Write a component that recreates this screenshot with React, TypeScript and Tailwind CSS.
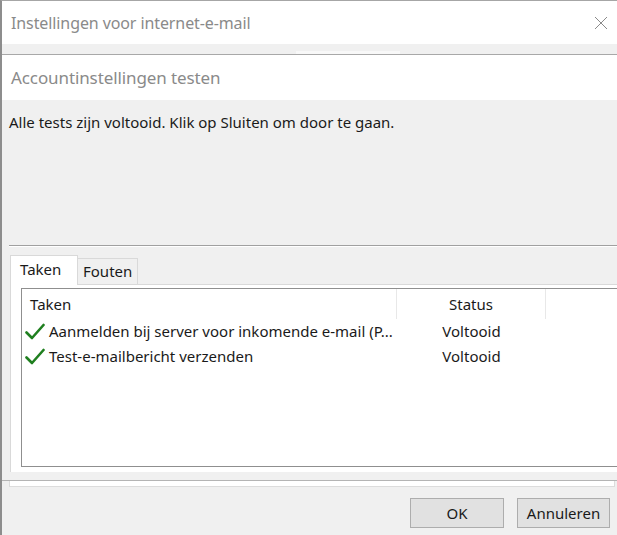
import React from "react";

const font = { fontFamily: '"Noto Sans", "Open Sans", sans-serif' };

function Check() {
  return (
    <svg width="20" height="18" viewBox="0 0 20 18" className="shrink-0">
      <path d="M1.5 9.5 L7 15 L18.5 2" fill="none" stroke="#1f7f1f" strokeWidth="2.6" strokeLinecap="round" strokeLinejoin="round" />
    </svg>
  );
}

export default function App() {
  return (
    <div className="w-[617px] h-[535px] overflow-hidden bg-[#f0f0f0] border-l-2 border-l-[#8d8d8d] border-t border-t-[#a6a6a6] text-[#1a1a1a]" style={font}>
      {/* title bar */}
      <div className="h-[43px] bg-white flex items-center justify-between pl-[9px] pr-[9px]">
        <span className="text-[16px] text-[#8a8a8a] tracking-[-0.1px]">Instellingen voor internet-e-mail</span>
        <svg width="14" height="14" viewBox="0 0 14 14">
          <path d="M1 1 L13 13 M13 1 L1 13" stroke="#8a8a8a" strokeWidth="1" />
        </svg>
      </div>
      <div className="h-[10px] bg-[#f0f0f0] flex items-end">
        <div className="ml-[294px] w-[104px] h-[3px] bg-[#f8f8f8]" />
      </div>
      <div className="h-px bg-[#a8a8a8]" />
      {/* header */}
      <div className="h-[45px] bg-white flex items-center pl-[9px]">
        <span className="text-[17px] text-[#8a8a8a] tracking-[-0.1px]">Accountinstellingen testen</span>
      </div>
      {/* body */}
      <div className="pl-[7px] pt-[10px] h-[145px]">
        <span className="text-[15px] text-[#1a1a1a]">Alle tests zijn voltooid. Klik op Sluiten om door te gaan.</span>
      </div>
      <div className="ml-[7px] h-px bg-[#a0a0a0]" />
      <div className="ml-[7px] h-px bg-white" />
      {/* tabs */}
      <div className="pl-[8px] pt-[7px] flex items-end h-[37px]">
        <div className="w-[68px] h-[30px] bg-white border border-[#d9d9d9] border-b-0 flex items-center pl-[9px] pb-[3px] text-[15px] relative z-10 -mb-px">Taken</div>
        <div className="w-[60px] h-[26px] bg-[#f0f0f0] border border-[#d9d9d9] border-l-0 border-b-0 flex items-center pl-[5px] text-[15px]">Fouten</div>
      </div>
      {/* tab panel */}
      <div className="ml-[8px] h-[188px] bg-white border-t border-l border-[#d9d9d9] pl-[10px] pt-[3px] pb-[5px]">
        <div className="h-full bg-white border-l border-t border-b border-[#8f8f8f]">
          <div className="flex h-[30px] text-[15px]">
            <div className="w-[375px] pl-[8px] flex items-center border-r border-[#e8e8e8]">Taken</div>
            <div className="w-[149px] flex items-center justify-center border-r border-[#e8e8e8]">Status</div>
          </div>
          <div className="flex h-[25px] items-center text-[15px]">
            <div className="w-[375px] pl-[3px] flex items-center gap-[4px] whitespace-nowrap overflow-hidden">
              <Check />
              <span>Aanmelden bij server voor inkomende e-mail (P...</span>
            </div>
            <div className="w-[149px] text-center">Voltooid</div>
          </div>
          <div className="flex h-[25px] items-center text-[15px]">
            <div className="w-[375px] pl-[3px] flex items-center gap-[4px] whitespace-nowrap overflow-hidden">
              <Check />
              <span>Test-e-mailbericht verzenden</span>
            </div>
            <div className="w-[149px] text-center">Voltooid</div>
          </div>
        </div>
      </div>
      <div className="h-[8px] bg-[#f0f0f0] ml-[8px]" />
      <div className="h-px bg-[#b4b4b4]" />
      <div className="ml-[7px] mr-[2px] h-[6px] bg-white border-b border-r border-l border-[#dcdcdc]" />
      {/* buttons */}
      <div className="flex justify-end gap-[13px] pr-[7px] pt-[11px]">
        <button className="w-[94px] h-[30px] bg-[#e1e1e1] border border-[#adadad] text-[15px]" style={font}>OK</button>
        <button className="w-[93px] h-[30px] bg-[#e1e1e1] border border-[#adadad] text-[15px]" style={font}>Annuleren</button>
      </div>
    </div>
  );
}
